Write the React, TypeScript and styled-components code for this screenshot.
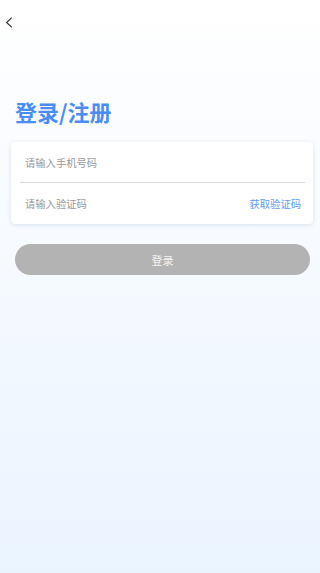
import React from "react";
import styled, { createGlobalStyle } from "styled-components";

const Global = createGlobalStyle`
  html, body { margin: 0; padding: 0; }
  body { font-family: "Noto Sans CJK SC", "Noto Sans", sans-serif; }
  * { box-sizing: border-box; }
`;

const Page = styled.div`
  width: 320px;
  min-height: 573px;
  background: linear-gradient(180deg, #ffffff 0%, #f6faff 45%, #eaf4ff 100%);
  display: flex;
  flex-direction: column;
`;

const TopBar = styled.div`
  height: 44px;
  display: flex;
  align-items: center;
  padding-left: 4px;
`;

const BackButton = styled.button`
  border: none;
  background: transparent;
  padding: 0;
  width: 9px;
  height: 12px;
  display: flex;
  align-items: center;
  justify-content: center;
  cursor: pointer;
`;

const Title = styled.h1`
  margin: 54px 0 0 15px;
  font-size: 22px;
  line-height: 26px;
  font-weight: 700;
  color: #4a8ef5;
  letter-spacing: 0;
`;

const Card = styled.div`
  margin: 18px 7px 0 11px;
  background: #ffffff;
  border-radius: 4px;
  box-shadow: 0 1px 4px rgba(120, 140, 170, 0.22);
  display: flex;
  flex-direction: column;
`;

const Row = styled.div<{ $divider?: boolean }>`
  height: 41px;
  margin: 0 8px 0 9px;
  padding: 0 4px 0 5px;
  display: flex;
  align-items: center;
  border-bottom: ${(p) => (p.$divider ? "1px solid #d9d9d9" : "none")};
`;

const Input = styled.input`
  flex: 1;
  min-width: 0;
  border: none;
  outline: none;
  background: transparent;
  padding: 0;
  font-family: inherit;
  font-size: 10.3px;
  color: #333;
  &::placeholder { color: #9a9a9a; }
`;

const CodeLink = styled.span`
  font-size: 10.3px;
  color: #5b9cf6;
  white-space: nowrap;
`;

const SubmitButton = styled.button`
  margin: 20px 10px 0 15px;
  height: 31px;
  border: none;
  border-radius: 16px;
  background: #b3b3b3;
  color: #f4f4f4;
  font-family: inherit;
  font-size: 11px;
  display: flex;
  align-items: center;
  justify-content: center;
  padding: 0;
`;

export default function App() {
  return (
    <>
      <Global />
      <Page>
        <TopBar>
          <BackButton aria-label="返回">
            <svg width="8" height="11" viewBox="0 0 8 11">
              <path d="M6.8 0.6 L1.6 5.5 L6.8 10.4" fill="none" stroke="#333" strokeWidth="1.2" />
            </svg>
          </BackButton>
        </TopBar>
        <Title>登录/注册</Title>
        <Card>
          <Row $divider>
            <Input placeholder="请输入手机号码" />
          </Row>
          <Row>
            <Input placeholder="请输入验证码" />
            <CodeLink>获取验证码</CodeLink>
          </Row>
        </Card>
        <SubmitButton>登录</SubmitButton>
      </Page>
    </>
  );
}
